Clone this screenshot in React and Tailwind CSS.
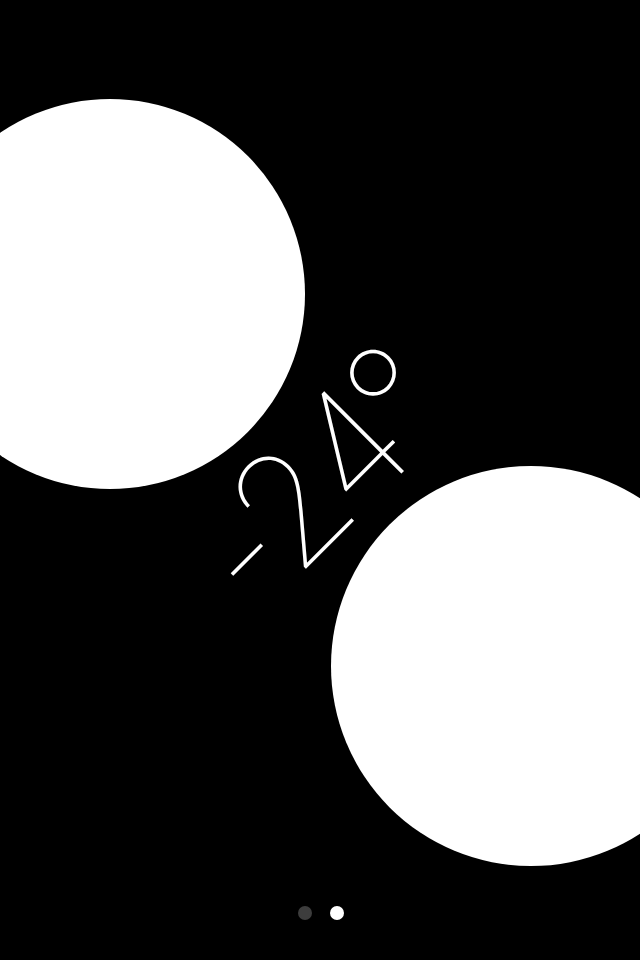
import React from 'react';

const App = () => {
  return (
    <div className="relative h-[960px] w-[640px] overflow-hidden bg-black flex flex-col justify-end items-center pb-[40px] pl-[2px]">
      {/* level bubbles */}
      <div className="absolute left-[-85px] top-[99px] h-[390px] w-[390px] rounded-full bg-white" />
      <div className="absolute left-[331px] top-[466px] h-[400px] w-[400px] rounded-full bg-white" />

      {/* tilt readout */}
      <div className="absolute left-[317px] top-[478px] h-0 w-0">
        <div
          className="absolute left-0 top-0 -translate-x-1/2 -translate-y-1/2 -rotate-45 whitespace-nowrap text-white text-[155px] leading-none font-thin tracking-[-0.05em]"
          style={{ fontFamily: 'Inter, Lato, "Liberation Sans", sans-serif' }}
        >
          -24°
        </div>
      </div>

      <div className="relative flex items-center gap-[18px]">
        <span className="h-[14px] w-[14px] rounded-full bg-[#3d3d3d]" />
        <span className="h-[14px] w-[14px] rounded-full bg-white" />
      </div>
    </div>
  );
};

export default App;
